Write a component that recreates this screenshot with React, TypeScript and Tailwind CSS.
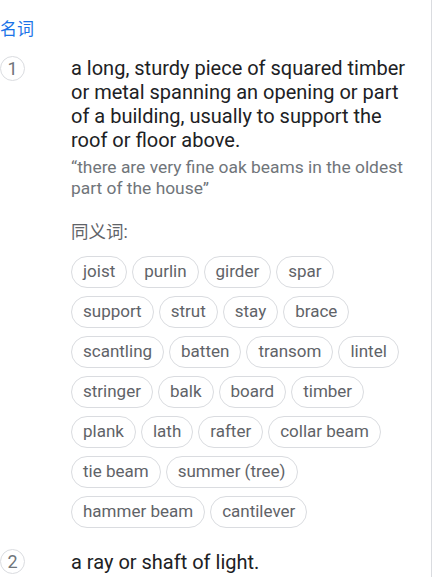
import React from 'react';

const synonyms = [
  'joist', 'purlin', 'girder', 'spar',
  'support', 'strut', 'stay', 'brace',
  'scantling', 'batten', 'transom', 'lintel',
  'stringer', 'balk', 'board', 'timber',
  'plank', 'lath', 'rafter', 'collar beam',
  'tie beam', 'summer (tree)',
  'hammer beam', 'cantilever',
];

const Num: React.FC<{ n: number }> = ({ n }) => (
  <div className="w-[25px] h-[25px] shrink-0 rounded-full border border-[#dadce0] flex items-center justify-center text-[18px] leading-none text-[#70757a]">
    {n}
  </div>
);

export default function App() {
  return (
    <div className="w-[432px] min-h-[577px] bg-white border-r border-[#dadce0] font-['Roboto',sans-serif] overflow-hidden">
      <div className="pt-[17px] text-[17px] leading-[24px] text-[#1a73e8] font-['Roboto','Noto_Sans_CJK_SC',sans-serif]">
        名词
      </div>

      <div className="flex mt-[15px]">
        <Num n={1} />
        <div className="ml-[46px] w-[342px]">
          <div className="text-[20px] leading-[24px] text-[#202124]">
            a long, sturdy piece of squared timber or metal spanning an opening or part of a building, usually to support the roof or floor above.
          </div>
          <div className="mt-[5px] text-[17.4px] leading-[21px] text-[#70757a]">
            “there are very fine oak beams in the oldest part of the house”
          </div>
          <div className="mt-[21px] text-[17.5px] leading-[24px] text-[#5f6368] font-['Roboto','Noto_Sans_CJK_SC',sans-serif]">
            同义词:
          </div>
          <div className="mt-[12px] flex flex-wrap gap-x-[5px] gap-y-[8px]">
            {synonyms.map((s) => (
              <span
                key={s}
                className="h-[32px] px-[11px] flex items-center rounded-full border border-[#dadce0] text-[17px] text-[#5f6368]"
              >
                {s}
              </span>
            ))}
          </div>
        </div>
      </div>

      <div className="flex mt-[21px] items-center">
        <Num n={2} />
        <div className="ml-[46px] text-[20px] leading-[24px] text-[#202124]">
          a ray or shaft of light.
        </div>
      </div>
    </div>
  );
}
